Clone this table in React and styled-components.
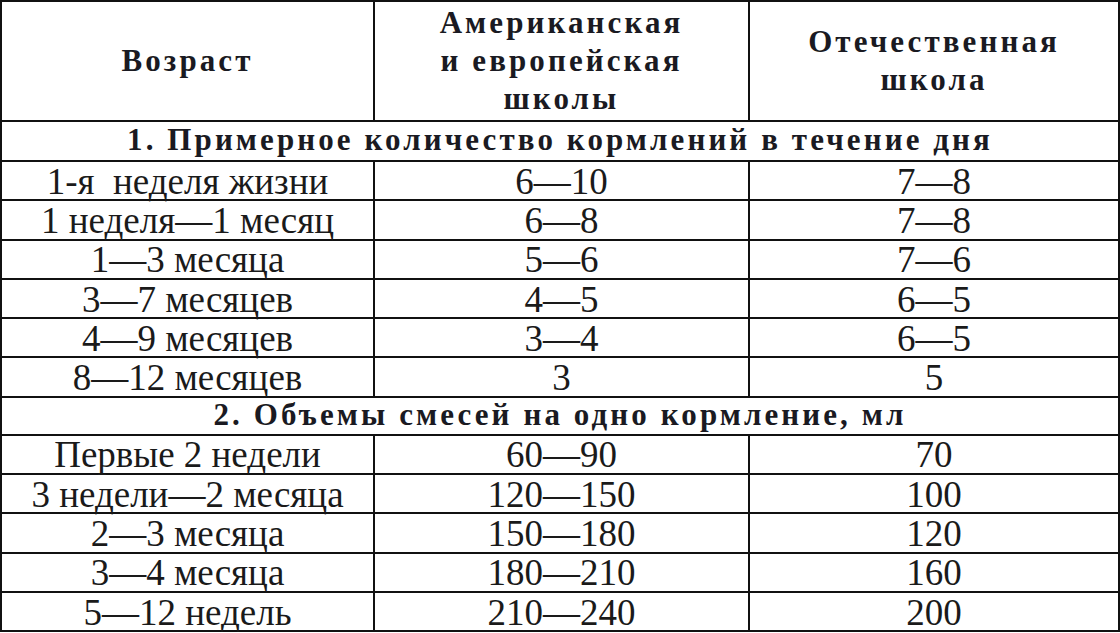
import React from 'react'
import styled, { createGlobalStyle } from 'styled-components'

const GlobalStyle = createGlobalStyle`
  body {
    margin: 0;
    background: #fff;
    color: #161616;
    font-family: "Liberation Serif", "Times New Roman", serif;
  }
`

const Table = styled.table`
  width: 1118px;
  border-collapse: collapse;
  table-layout: fixed;
  border: 2px solid #111;
  font-family: "Liberation Serif", "Times New Roman", serif;
`
const Col = styled.col`
  width: ${(p) => p.$w}px;
`
const HeadCell = styled.th`
  height: 118px;
  padding: 0;
  border: 2px solid #111;
  font-family: "Liberation Serif", "Times New Roman", serif;
  font-size: 31px;
  font-weight: 700;
  letter-spacing: 3.1px;
  line-height: 38px;
  text-align: center;
  vertical-align: middle;
  color: #1a1a22;
`
const SectionCell = styled.td`
  height: ${(p) => p.$h}px;
  padding: 0 0 2px;
  border: 2px solid #111;
  font-family: "Liberation Serif", "Times New Roman", serif;
  font-size: 31px;
  font-weight: 700;
  letter-spacing: 3.1px;
  line-height: 30px;
  text-align: center;
  color: #1a1a22;
`
const Cell = styled.td`
  height: 36.3px;
  padding: 1px 0 0;
  border: 2px solid #111;
  font-family: "Liberation Serif", "Times New Roman", serif;
  font-size: 37px;
  line-height: 33px;
  text-align: center;
  white-space: pre;
  color: #1a1a1a;
`

const feedings = [
  ['1-я  неделя жизни', '6—10', '7—8'],
  ['1 неделя—1 месяц', '6—8', '7—8'],
  ['1—3 месяца', '5—6', '7—6'],
  ['3—7 месяцев', '4—5', '6—5'],
  ['4—9 месяцев', '3—4', '6—5'],
  ['8—12 месяцев', '3', '5'],
]

const volumes = [
  ['Первые 2 недели', '60—90', '70'],
  ['3 недели—2 месяца', '120—150', '100'],
  ['2—3 месяца', '150—180', '120'],
  ['3—4 месяца', '180—210', '160'],
  ['5—12 недель', '210—240', '200'],
]

const Rows = ({ data }) =>
  data.map((row) => (
    <tr key={row[0]}>
      {row.map((v, i) => (
        <Cell key={i}>{v}</Cell>
      ))}
    </tr>
  ))

export default function App() {
  return (
    <>
      <GlobalStyle />
      <Table>
        <colgroup>
          <Col $w={373} />
          <Col $w={375} />
          <Col $w={370} />
        </colgroup>
        <thead>
          <tr>
            <HeadCell>Возраст</HeadCell>
            <HeadCell>
              Американская
              <br />
              и европейская
              <br />
              школы
            </HeadCell>
            <HeadCell>
              Отечественная
              <br />
              школа
            </HeadCell>
          </tr>
        </thead>
        <tbody>
          <tr>
            <SectionCell colSpan={3} $h={36}>
              1. Примерное количество кормлений в течение дня
            </SectionCell>
          </tr>
          <Rows data={feedings} />
          <tr>
            <SectionCell colSpan={3} $h={34}>
              2. Объемы смесей на одно кормление, мл
            </SectionCell>
          </tr>
          <Rows data={volumes} />
        </tbody>
      </Table>
    </>
  )
}
